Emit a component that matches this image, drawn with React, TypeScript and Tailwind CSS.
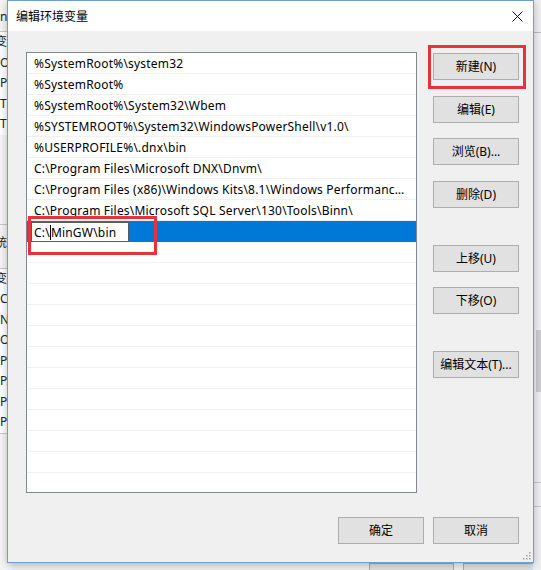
import React from 'react';

const paths = [
  '%SystemRoot%\\system32',
  '%SystemRoot%',
  '%SystemRoot%\\System32\\Wbem',
  '%SYSTEMROOT%\\System32\\WindowsPowerShell\\v1.0\\',
  '%USERPROFILE%\\.dnx\\bin',
  'C:\\Program Files\\Microsoft DNX\\Dnvm\\',
  'C:\\Program Files (x86)\\Windows Kits\\8.1\\Windows Performance Toolkit\\',
  'C:\\Program Files\\Microsoft SQL Server\\130\\Tools\\Binn\\',
];

const font = "font-['Noto_Sans','Noto_Sans_CJK_SC',sans-serif]";

function Btn({ label, className = '' }: { label: string; className?: string }) {
  return (
    <div
      className={`w-[86px] h-[27px] bg-[#e1e1e1] border border-[#adadad] flex items-center justify-center text-[12px] text-black ${className}`}
    >
      {label}
    </div>
  );
}

function Background() {
  // the window behind the dialog, only thin strips of it show
  return (
    <div className="absolute inset-0 flex bg-[#f0f0f0]">
      <div className="w-[12px] flex flex-col text-[12px] text-[#222] leading-none bg-[#f7f5f3]">
        <div className="h-[32px] border-b border-[#c8c8c8] flex items-center pt-[3px]">nc</div>
        <div className="flex flex-col bg-white">
          {['变', 'O', 'Pa', 'TE', 'TM'].map((t, i) => (
            <div key={i} className={`h-[20.5px] flex items-center ${i === 0 ? '-ml-[5px]' : ''}`}>
              {t}
            </div>
          ))}
        </div>
        <div className="h-[50px]" />
        <div className="h-[40px] border-b border-[#c8c8c8]" />
        <div className="h-[10px]" />
        <div className="h-[16px] flex items-center -ml-[5px]">统</div>
        <div className="h-[18px] border-b border-[#c8c8c8]" />
        <div className="flex flex-col bg-white">
          {['变', 'C', 'N', 'O', 'Pa', 'PA', 'PF', 'PF'].map((t, i) => (
            <div key={i} className={`h-[20.5px] flex items-center ${i === 0 ? '-ml-[5px]' : ''}`}>
              {t}
            </div>
          ))}
        </div>
        <div className="flex-1 border-t border-[#c8c8c8]" />
      </div>
      <div className="flex-1 flex flex-col justify-end">
        <div className="h-[7px] flex justify-end gap-[9px] pl-[357px]">
          <div className="w-[85px] border border-b-0 border-[#adadad] bg-[#e1e1e1]" />
          <div className="flex-1 border border-b-0 border-r-0 border-[#adadad] bg-[#e1e1e1]" />
        </div>
      </div>
      <div className="w-[8px] flex flex-col">
        <div className="h-[33px] border-b border-[#bdbdbd] bg-[#f0f0f0]" />
        <div className="h-[297px] bg-[#f0f0f0]" />
        <div className="h-[62px] ml-[3px] bg-[#cdcdcd]" />
        <div className="h-[90px]" />
        <div className="h-[24px] border-t border-[#c8c8c8]" />
        <div className="flex-1 border-t border-[#c8c8c8]" />
      </div>
    </div>
  );
}

export default function App() {
  const emptyRows = Array.from({ length: 12 });

  return (
    <div className={`relative w-[541px] h-[570px] overflow-hidden ${font}`}>
      <Background />

      <div className="absolute left-[7px] top-0 w-[527px] h-[563px] flex flex-col border border-[#6b9fd4] bg-[#f0f0f0] shadow-[0_2px_8px_rgba(0,0,0,0.25)]">
        {/* title bar */}
        <div className="h-[30px] bg-white flex items-center justify-between pl-[8px] pr-[10px] pt-[1px]">
          <span className="text-[12px] text-black">编辑环境变量</span>
          <svg width="11" height="11" viewBox="0 0 11 11">
            <path d="M0.5 0.5 L10.5 10.5 M10.5 0.5 L0.5 10.5" stroke="#111" strokeWidth="1" fill="none" />
          </svg>
        </div>

        {/* body */}
        <div className="flex-1 flex flex-col pl-[18px] pr-[14px] pt-[21px] relative">
          <div className="flex gap-[16px]">
            <div className="w-[391px] h-[441px] border border-[#828790] bg-white overflow-hidden">
              <div className="flex flex-col">
                {paths.map((p) => (
                  <div
                    key={p}
                    className="h-[21px] border-b border-[#f0f0f0] flex items-center pt-[2px] pl-[7px] pr-[5px] text-[12px] tracking-[0.2px] text-black whitespace-nowrap overflow-hidden"
                  >
                    <span className="truncate">{p}</span>
                  </div>
                ))}
                <div className="relative h-[21px] bg-[#0078d7] flex items-start pl-[4px] pt-[1px]">
                  <div className="w-[98px] h-[20px] bg-white border border-[#5a5a5a] flex items-center pl-[2px] pt-[1px] text-[12px] tracking-[0.2px] text-black">
                    <span>C:\</span>
                    <span className="inline-block w-px h-[15px] bg-black" />
                    <span>MinGW\bin</span>
                  </div>
                  <div className="absolute left-[1px] top-[-5px] w-[129px] h-[39px] border-[3px] border-[#e5323c]" />
                </div>
                {emptyRows.map((_, i) => (
                  <div key={i} className="h-[21px] border-b border-[#f0f0f0] shrink-0" />
                ))}
              </div>
            </div>

            <div className="w-[86px] flex flex-col pt-[1px]">
              <div className="relative">
                <Btn label="新建(N)" />
                <div className="absolute left-[-5px] top-[-8px] w-[98px] h-[44px] border-[3px] border-[#e5323c]" />
              </div>
              <Btn label="编辑(E)" className="mt-[16px]" />
              <Btn label="浏览(B)..." className="mt-[15px]" />
              <Btn label="删除(D)" className="mt-[16px]" />
              <Btn label="上移(U)" className="mt-[37px]" />
              <Btn label="下移(O)" className="mt-[15px]" />
              <Btn label="编辑文本(T)..." className="mt-[37px]" />
            </div>
          </div>

          <div className="mt-[24px] flex justify-end gap-[9px]">
            <Btn label="确定" />
            <Btn label="取消" />
          </div>

          {/* size grip */}
          <svg className="absolute right-[2px] bottom-[2px]" width="10" height="10" viewBox="0 0 10 10">
            {[
              [8, 2],
              [8, 5],
              [5, 5],
              [8, 8],
              [5, 8],
              [2, 8],
            ].map(([x, y], i) => (
              <rect key={i} x={x} y={y} width="1.5" height="1.5" fill="#a0a0a0" />
            ))}
          </svg>
        </div>
      </div>
    </div>
  );
}
